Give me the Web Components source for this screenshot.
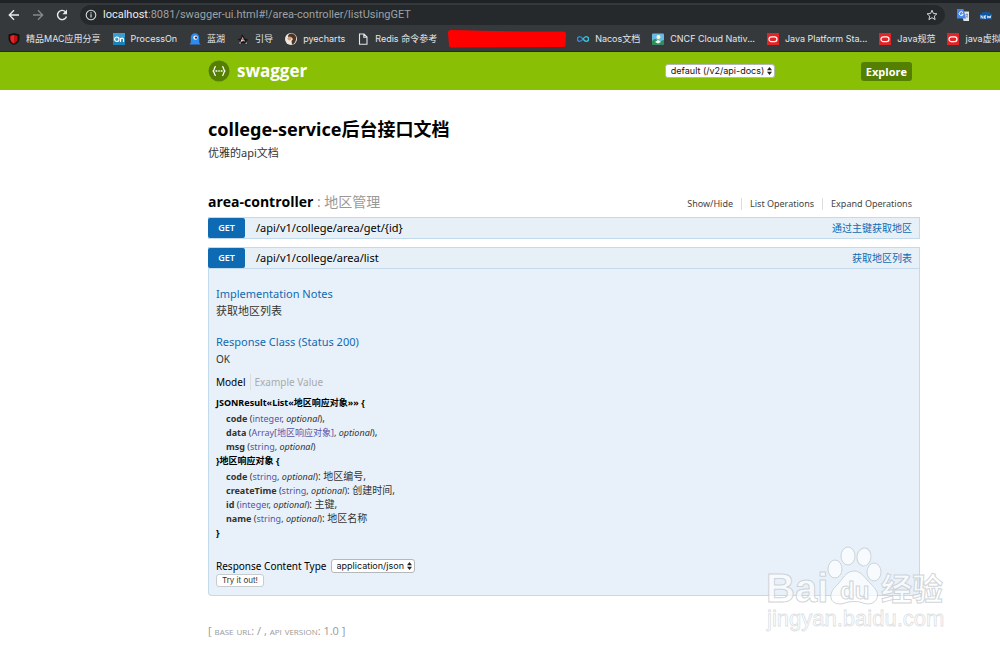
<!DOCTYPE html>
<html lang="zh-CN">
<head>
<meta charset="utf-8">
<title>Swagger UI</title>
<style>
  body {
    --body-font: "Noto Sans", "Noto Sans CJK SC", sans-serif;
    --display-font: "Open Sans", "Noto Sans CJK SC", sans-serif;
    margin: 0;
    overflow-x: hidden;
    background: #fff;
    color: #333;
    font-family: var(--body-font);
    font-size: 11px;
    line-height: 16px;
  }
</style>
</head>
<body>
<browser-chrome>
  <bookmark-item name="精品MAC应用分享">
    <svg viewBox="0 0 12 12"><path d="M6 0 11.500 1.500V6c0 3-2.500 5-5.500 6C3 11 .5 9 .5 6V1.500z" fill="#111"/><path d="M6 2 9.500 3v3c0 2-1.500 3.500-3.500 4.500C4 9.500 2.500 8 2.500 6V3z" fill="#b11"/><path d="M6 2v8.500C4 9.500 2.500 8 2.500 6V3z" fill="#e22"/></svg>
  </bookmark-item>
  <bookmark-item name="ProcessOn">
    <svg viewBox="0 0 12 12"><path d="M0 0h12v12H0z" fill="#1b83b8"/><path d="M0 0h12v4L0 8z" fill="#3b9fce"/><circle cx="3.800" cy="6.200" r="2.200" fill="none" stroke="#fff" stroke-width="1.200"/><path d="M7.500 9V5m0 1.500c.6-1.800 3-1.800 3 0V9" fill="none" stroke="#fff" stroke-width="1.200"/></svg>
  </bookmark-item>
  <bookmark-item name="蓝湖">
    <svg viewBox="0 0 12 12"><path d="M1.800 9.500V4.500a4.200 4.200 0 0 1 8.400 0v5l1.300 2H.5z" fill="#2d8cf0"/><circle cx="6.500" cy="4.600" r="2.200" fill="#fff"/><circle cx="7" cy="4.600" r="1.200" fill="#14396b"/></svg>
  </bookmark-item>
  <bookmark-item name="引导">
    <svg viewBox="0 0 12 12"><path d="M5 1 7.500 5 11.500 7 9 8l1.500 3.500L6 10l-4 1.500L3.500 8 .5 6.500 4 5z" fill="#15161a"/><path d="M5.500 4 8 8.500 6 8l-2.500 1z" fill="#eee"/><path d="m5 6 1-1 1 2-1 1z" fill="#d33"/><path d="m2 10 1.500-1v2zM9 9l1 1.500-1.500.5z" fill="#fff"/></svg>
  </bookmark-item>
  <bookmark-item name="pyecharts">
    <svg viewBox="0 0 12 12"><circle cx="6" cy="6" r="6" fill="#eee8df"/><path d="M3 4c0-5 7-4 8 0 .5 3-1 7-4 7.500L6.500 8 8 6 6 4z" fill="#4c3426"/><circle cx="4.500" cy="5.500" r="2" fill="#d9a27c"/></svg>
  </bookmark-item>
  <bookmark-item name="Redis 命令参考">
    <svg viewBox="0 0 12 12"><path d="M2.500 1h4.500l3 3v7.300H2.500zM6.800 1v3.200H10" fill="none" stroke="#e4e6e8" stroke-width="1.100"/></svg>
  </bookmark-item>
  <redacted-mark></redacted-mark>
  <bookmark-item name="Nacos文档">
    <svg viewBox="0 0 12 12"><path d="M6 6C4.500 4 3.800 3.600 2.800 3.600a2.400 2.400 0 0 0 0 4.800C4.200 8.400 5 7.500 6 6" fill="none" stroke="#2f8fe0" stroke-width="1.300"/><path d="M6 6c1-1.500 1.800-2.400 3.200-2.400a2.400 2.400 0 0 1 0 4.800C8 8.400 7.500 8 6 6" fill="none" stroke="#38c8de" stroke-width="1.300"/></svg>
  </bookmark-item>
  <bookmark-item name="CNCF Cloud Nativ...">
    <svg viewBox="0 0 12 12"><rect y=".5" width="12" height="11" rx="1" fill="#69b9e6"/><circle cx="6.500" cy="4" r="2" fill="#fff6c8"/><path d="M0 8c3-3 4-2 6 0s4-1 6-1v4.500H0z" fill="#2c9150"/><path d="m3 9 3-2 3 2-3 1.500z" fill="#f3fff5"/></svg>
  </bookmark-item>
  <bookmark-item name="Java Platform Sta...">
    <svg viewBox="0 0 12 12"><path d="M0 0h12v12H0z" fill="#e02428"/><rect x="2" y="3.800" width="8" height="4.800" rx="2.400" fill="none" stroke="#fff" stroke-width="1.200"/></svg>
  </bookmark-item>
  <bookmark-item name="Java规范">
    <svg viewBox="0 0 12 12"><path d="M0 0h12v12H0z" fill="#e02428"/><rect x="2" y="3.800" width="8" height="4.800" rx="2.400" fill="none" stroke="#fff" stroke-width="1.200"/></svg>
  </bookmark-item>
  <bookmark-item name="java虚拟">
    <svg viewBox="0 0 12 12"><path d="M0 0h12v12H0z" fill="#e02428"/><rect x="2" y="3.800" width="8" height="4.800" rx="2.400" fill="none" stroke="#fff" stroke-width="1.200"/></svg>
  </bookmark-item>
</browser-chrome>

<swagger-header></swagger-header>

<swagger-page>
  <api-info heading="college-service后台接口文档">优雅的api文档</api-info>
  <api-resource name="area-controller" description="地区管理">
    <api-operation method="GET" path="/api/v1/college/area/get/{id}" summary="通过主键获取地区"></api-operation>
    <api-operation method="GET" path="/api/v1/college/area/list" summary="获取地区列表" open>
      <operation-details>
        <span slot="notes">获取地区列表</span>
        <span slot="response">OK</span>
        <model-signature name="JSONResult«List«地区响应对象»»">
          <model-property name="code" type="integer" end=","></model-property>
          <model-property name="data" type="Array[地区响应对象]" end=","></model-property>
          <model-property name="msg" type="string"></model-property>
        </model-signature>
        <model-signature name="地区响应对象" follows>
          <model-property name="code" type="string" end=": 地区编号,"></model-property>
          <model-property name="createTime" type="string" end=": 创建时间,"></model-property>
          <model-property name="id" type="integer" end=": 主键,"></model-property>
          <model-property name="name" type="string" end=": 地区名称"></model-property>
        </model-signature>
      </operation-details>
    </api-operation>
  </api-resource>
  <api-footer></api-footer>
</swagger-page>

<site-watermark></site-watermark>

<script>
function render(element, html) {
  const template = document.createElement('template');
  template.innerHTML = html;
  element.attachShadow({ mode: 'open' }).appendChild(template.content.cloneNode(true));
}

class BrowserChrome extends HTMLElement {
  constructor() {
    super();
    render(this, `
      <style>
        :host {
          display: block;
          overflow: hidden;
          background: #35393c;
          border-top: 3px solid #202326;
          border-bottom: 1px solid #26282b;
        }
        .toolbar {
          display: flex;
          align-items: center;
          gap: 12px;
          height: 23px;
          padding-left: 8px;
        }
        button {
          display: flex;
          padding: 0;
          border: 0;
          background: none;
        }
        .address {
          display: flex;
          flex: 1;
          align-items: center;
          gap: 6px;
          height: 20px;
          padding: 0 7px 0 5px;
          border-radius: 10px;
          background: #25292c;
        }
        .url {
          flex: 1;
          color: #9da1a5;
          font: 11px/20px Roboto, sans-serif;
        }
        .url b {
          color: #eceef0;
          font-weight: 400;
        }
        .bookmarks {
          display: flex;
          align-items: center;
          gap: 12px;
          height: 25px;
          padding-left: 8px;
        }
        .extensions {
          display: flex;
          align-items: center;
          gap: 11px;
          padding-right: 8px;
        }
      </style>
      <div class="toolbar">
        <button aria-label="Back"><svg width="12" height="12" viewBox="0 0 12 12"><path d="M11 6H1.500M6 1.300 1.300 6 6 10.700" fill="none" stroke="#e8eaed" stroke-width="1.400"/></svg></button>
        <button aria-label="Forward"><svg width="12" height="12" viewBox="0 0 12 12"><path d="M1 6h9.500M6 1.300 10.700 6 6 10.700" fill="none" stroke="#86898c" stroke-width="1.300"/></svg></button>
        <button aria-label="Reload"><svg width="12" height="12" viewBox="0 0 12 12"><path d="M10.500 7.500A4.600 4.600 0 1 1 9.400 2.700" fill="none" stroke="#e8eaed" stroke-width="1.400"/><path d="M11 .6v4.600H6.400z" fill="#e8eaed"/></svg></button>
        <div class="address">
          <svg width="12" height="12" viewBox="0 0 12 12"><circle cx="6" cy="6" r="4.800" fill="none" stroke="#d5d8db" stroke-width="1.100"/><path d="M6 5.300v3.300M6 3.200v1.200" stroke="#d5d8db" stroke-width="1.200"/></svg>
          <div class="url" role="textbox" contenteditable="true" spellcheck="false" aria-label="Address"><b>localhost</b>:8081/swagger-ui.html#!/area-controller/listUsingGET</div>
          <button aria-label="Bookmark this page"><svg width="12" height="12" viewBox="0 0 12 12"><path d="m6 1.200 1.400 3.300 3.500.3-2.600 2.300.8 3.500L6 8.700l-3.100 1.900.8-3.500L1.100 4.800l3.500-.3z" fill="none" stroke="#d5d8db"/></svg></button>
        </div>
        <div class="extensions">
          <button aria-label="Translate"><svg width="12" height="12" viewBox="0 0 12 12"><path d="M4.500 2.500H12V12H6.500z" fill="#e2e5e9"/><path d="M0 0h6.500l2.500 9.500H0z" fill="#4687ec"/><path d="M6 3.600a2 2 0 1 0 .2 1.600H4.500" fill="none" stroke="#fff"/><path d="M8.500 5.500H11m-1.200-1v1m.7 0c0 1.500-1 2.500-1.700 3m.2-2c.4 1 1 1.500 2 2" fill="none" stroke="#68788c" stroke-width=".7"/></svg></button>
          <button aria-label="New extension"><svg width="12" height="12" viewBox="0 0 12 12"><path d="M2 3h3l1-1 1 1h3v3H2z" fill="#17558e"/><path d="M0 4.500h12v6H0z" fill="#0d56a1"/><path d="M1 9.500v-3l2 3v-3m3 .3H4.500v2.500H6M4.500 8H6m1.200-1.500.7 2.700L9 7l1 2.200.8-2.700" fill="none" stroke="#fff" stroke-width=".8"/></svg></button>
        </div>
      </div>
      <nav class="bookmarks"><slot></slot></nav>
    `);
  }
}

class BookmarkItem extends HTMLElement {
  constructor() {
    super();
    render(this, `
      <style>
        :host {
          display: block;
          flex: none;
        }
        a {
          display: flex;
          align-items: center;
          gap: 6px;
          color: #e4e6e8;
          font: 9px/14px Inter, "Noto Sans CJK SC", sans-serif;
          text-decoration: none;
          white-space: nowrap;
        }
        ::slotted(svg) {
          display: block;
          width: 12px;
          height: 12px;
        }
      </style>
      <a href="#"><slot></slot><span class="name"></span></a>
    `);
  }

  connectedCallback() {
    this.shadowRoot.querySelector('.name').textContent = this.getAttribute('name');
  }
}

class RedactedMark extends HTMLElement {
  constructor() {
    super();
    render(this, `
      <style>
        :host {
          display: block;
          flex: none;
          width: 118px;
          height: 18px;
          margin: 0 -1px;
        }
        svg {
          display: block;
        }
      </style>
      <svg width="118" height="18" viewBox="0 0 118 18"><path d="M3 0C40 1 80 1.500 115 1.500q3 0 3 3L117.500 15q0 2-3 2L3 17.500Q1 17.500 1 15L0 3q0-3 3-3z" fill="#fe0000"/></svg>
    `);
  }
}

class SwaggerHeader extends HTMLElement {
  constructor() {
    super();
    render(this, `
      <style>
        :host {
          display: flex;
          align-items: center;
          height: 38px;
          padding: 0 88px 0 208px;
          background: #89bf04;
          font-family: var(--display-font);
        }
        .logo {
          display: flex;
          flex: 1;
          align-items: center;
          gap: 7px;
          color: #fff;
          font-size: 17px;
          font-weight: 700;
          line-height: 24px;
          text-decoration: none;
        }
        form {
          display: flex;
          align-items: center;
          gap: 86px;
        }
        .explore {
          height: 19px;
          padding: 0 5px;
          border: 0;
          border-radius: 3px;
          background: #547f00;
          color: #fff;
          font: inherit;
          font-weight: 700;
          line-height: 19px;
        }
      </style>
      <a class="logo" href="#">
        <svg width="22" height="22" viewBox="0 0 22 22"><circle cx="11" cy="11" r="10.500" fill="#547f00"/><path d="M7.800 6.500C5.800 6.500 7 10.500 4.800 11 7 11.500 5.800 15.500 7.800 15.500M14.200 6.500c2 0 .8 4 3 4.500-2.200.5-1 4.500-3 4.500" fill="none" stroke="#fff" stroke-width="1.300"/><path d="M7.500 11h1.800m1 0h1.400m1 0h1.800" stroke="#fff" stroke-width="1.500"/></svg>
        <span>swagger</span>
      </a>
      <form>
        <mac-select label="API definition" value="default (/v2/api-docs)" style="--select-width: 110px"></mac-select>
        <button class="explore" type="button">Explore</button>
      </form>
    `);
  }
}

// Drop-down with the stacked up/down arrows of the native macOS control
class MacSelect extends HTMLElement {
  constructor() {
    super();
    render(this, `
      <style>
        :host {
          display: inline-grid;
          align-items: center;
          width: var(--select-width);
        }
        select, svg {
          grid-area: 1 / 1;
        }
        select {
          box-sizing: border-box;
          width: 100%;
          height: 14px;
          margin: 0;
          padding: 0 5px;
          appearance: none;
          border: 1px solid #b4b8ba;
          border-radius: 3px;
          background: #fff;
          color: #111;
          font: 9px/12px Inter, sans-serif;
        }
        svg {
          justify-self: end;
          margin-right: 3px;
          pointer-events: none;
        }
      </style>
      <select><option></option></select>
      <svg width="5" height="8" viewBox="0 0 5 8"><path d="M2.500 0 5 3.200H0zM2.500 8 0 4.800h5z" fill="#222"/></svg>
    `);
  }

  connectedCallback() {
    this.shadowRoot.querySelector('select').setAttribute('aria-label', this.getAttribute('label'));
    this.shadowRoot.querySelector('option').textContent = this.getAttribute('value');
  }
}

class SwaggerPage extends HTMLElement {
  constructor() {
    super();
    render(this, `
      <style>
        :host {
          display: block;
          padding: 27px 80px 0 208px;
        }
      </style>
      <slot></slot>
    `);
  }
}

class ApiInfo extends HTMLElement {
  constructor() {
    super();
    render(this, `
      <style>
        :host {
          display: block;
          margin-bottom: 31px;
        }
        h1 {
          margin: 0 0 4px;
          color: #000;
          font-family: var(--body-font);
          font-size: 18px;
          line-height: 24px;
        }
      </style>
      <h1></h1>
      <slot></slot>
    `);
  }

  connectedCallback() {
    this.shadowRoot.querySelector('h1').textContent = this.getAttribute('heading');
  }
}

class ApiResource extends HTMLElement {
  constructor() {
    super();
    render(this, `
      <style>
        :host {
          display: block;
        }
        .heading {
          display: flex;
          align-items: flex-start;
          justify-content: space-between;
          height: 25px;
        }
        h2 {
          margin: 0;
          color: #999;
          font-family: var(--display-font);
          font-size: 14px;
          font-weight: 400;
          line-height: 20px;
        }
        h2 a {
          color: #000;
          font-weight: 700;
          text-decoration: none;
        }
        ul {
          display: flex;
          margin: 6px 8px 0 0;
          padding: 0;
          list-style: none;
          font-size: 9px;
          line-height: 12px;
        }
        li + li {
          margin-left: 8px;
          padding-left: 8px;
          border-left: 1px solid #ddd;
        }
        li a {
          color: #444;
          text-decoration: none;
        }
        .operations {
          display: flex;
          flex-direction: column;
          gap: 8px;
        }
      </style>
      <div class="heading">
        <h2><a href="#"></a> : <span></span></h2>
        <ul>
          <li><a href="#">Show/Hide</a></li>
          <li><a href="#">List Operations</a></li>
          <li><a href="#">Expand Operations</a></li>
        </ul>
      </div>
      <div class="operations"><slot></slot></div>
    `);
  }

  connectedCallback() {
    this.shadowRoot.querySelector('h2 a').textContent = this.getAttribute('name');
    this.shadowRoot.querySelector('h2 span').textContent = this.getAttribute('description');
  }
}

class ApiOperation extends HTMLElement {
  constructor() {
    super();
    render(this, `
      <style>
        :host {
          display: block;
        }
        .heading {
          display: flex;
          align-items: center;
          height: 20px;
          border: 1px solid #c3d9ec;
          background: #e7f0f7;
        }
        a {
          text-decoration: none;
        }
        .method {
          width: 37px;
          margin-left: -1px;
          border-radius: 2px;
          background: #0f6ab4;
          color: #fff;
          font-family: var(--display-font);
          font-size: 9px;
          font-weight: 600;
          line-height: 20px;
          text-align: center;
        }
        .path {
          flex: 1;
          padding-left: 11px;
          color: #000;
          font-size: 11px;
        }
        .summary {
          padding-right: 7px;
          color: #0f6ab4;
          font-size: 10px;
        }
        .content {
          display: none;
          padding: 16px 7px 8px;
          border: 1px solid #c3d9ec;
          border-top: 0;
          border-radius: 0 0 4px 4px;
          background: #e8f1f9;
        }
        :host([open]) .content {
          display: block;
        }
      </style>
      <div class="heading">
        <a class="method" href="#"></a>
        <a class="path" href="#"></a>
        <a class="summary" href="#"></a>
      </div>
      <div class="content"><slot></slot></div>
    `);
  }

  connectedCallback() {
    this.shadowRoot.querySelector('.method').textContent = this.getAttribute('method');
    this.shadowRoot.querySelector('.path').textContent = this.getAttribute('path');
    this.shadowRoot.querySelector('.summary').textContent = this.getAttribute('summary');
  }
}

class OperationDetails extends HTMLElement {
  constructor() {
    super();
    render(this, `
      <style>
        :host {
          display: block;
        }
        h4 {
          margin: 0;
          color: #0f6ab4;
          font-size: 11px;
          font-weight: 400;
          line-height: 18px;
        }
        p {
          margin: 0 0 14px;
        }
        .response {
          margin-bottom: 7px;
          font-size: 10px;
        }
        .tabs {
          display: flex;
          margin-bottom: 5px;
        }
        .tabs button {
          height: 16px;
          padding: 0;
          border: 0;
          background: none;
          color: #aaa;
          font: inherit;
          font-size: 10px;
        }
        .tabs .active {
          margin-right: 4px;
          padding-right: 4px;
          border-right: 1px solid #ddd;
          color: #000;
        }
        .content-type {
          display: flex;
          align-items: center;
          gap: 4px;
          margin-top: 17px;
          color: #000;
          font-size: 10px;
        }
        .submit {
          display: block;
          height: 13px;
          padding: 0 5px;
          border: 1px solid #c8cccf;
          border-radius: 3px;
          background: #fff;
          color: #333;
          font: 8px/11px Inter, sans-serif;
        }
      </style>
      <h4>Implementation Notes</h4>
      <p><slot name="notes"></slot></p>
      <h4>Response Class (Status 200)</h4>
      <p class="response"><slot name="response"></slot></p>
      <div class="tabs">
        <button class="active" type="button">Model</button>
        <button type="button">Example Value</button>
      </div>
      <slot></slot>
      <div class="content-type">
        <span>Response Content Type</span>
        <mac-select label="Response Content Type" value="application/json" style="--select-width: 84px"></mac-select>
      </div>
      <button class="submit" type="button">Try it out!</button>
    `);
  }
}

class ModelSignature extends HTMLElement {
  constructor() {
    super();
    render(this, `
      <style>
        :host {
          display: block;
          color: #000;
          font-size: 9px;
        }
        b {
          display: block;
          line-height: 16px;
        }
        .properties {
          padding-left: 10px;
        }
      </style>
      <b class="start"></b>
      <div class="properties"><slot></slot></div>
      <b class="end">}</b>
    `);
  }

  connectedCallback() {
    // A signature that follows another one starts on its closing brace's line
    const start = this.hasAttribute('follows') ? '}' : '';
    this.shadowRoot.querySelector('.start').textContent = `${start}${this.getAttribute('name')} {`;
    const next = this.nextElementSibling;
    if (next && next.hasAttribute('follows')) {
      this.shadowRoot.querySelector('.end').remove();
    }
  }
}

class ModelProperty extends HTMLElement {
  constructor() {
    super();
    render(this, `
      <style>
        :host {
          display: block;
          height: 14px;
          color: #333;
          line-height: 14px;
        }
        .type {
          color: #55a;
        }
        .end {
          font-size: 10px;
        }
      </style>
      <b class="name"></b> (<span class="type"></span>, <i>optional</i>)<span class="end"></span>
    `);
  }

  connectedCallback() {
    this.shadowRoot.querySelector('.name').textContent = this.getAttribute('name');
    this.shadowRoot.querySelector('.type').textContent = this.getAttribute('type');
    this.shadowRoot.querySelector('.end').textContent = this.getAttribute('end');
  }
}

class ApiFooter extends HTMLElement {
  constructor() {
    super();
    render(this, `
      <style>
        :host {
          display: block;
          padding: 27px 0 15px;
          color: #999;
          font-family: var(--display-font);
        }
        span {
          font-variant: small-caps;
        }
      </style>
      [ <span>base url</span>: / , <span>api version</span>: 1.0 ]
    `);
  }
}

class SiteWatermark extends HTMLElement {
  constructor() {
    super();
    render(this, `
      <style>
        :host {
          position: absolute;
          top: 540px;
          right: 48px;
          pointer-events: none;
        }
        svg {
          display: block;
        }
        text {
          font-family: "Liberation Sans", "Noto Sans CJK SC", sans-serif;
        }
      </style>
      <svg width="186" height="96" viewBox="0 0 186 96" fill="#fff" fill-opacity=".7" stroke="#c4cacf" stroke-opacity=".8">
        <text x="0" y="62" font-size="40" font-weight="700">Bai</text>
        <ellipse cx="69" cy="29" rx="7" ry="9"/>
        <ellipse cx="82" cy="16" rx="7" ry="9"/>
        <ellipse cx="98" cy="17" rx="7" ry="9" transform="rotate(8 98 17)"/>
        <ellipse cx="108" cy="32" rx="7" ry="9"/>
        <path d="M88 31c7 0 11 7 16 12s9 9 7 15-9 7-14 5-13-2-18 0-13 1-14-5 3-10 7-14 8-13 16-13z"/>
        <text x="74" y="59" font-size="24" font-weight="700">du</text>
        <text x="115" y="60" font-size="31" font-weight="700">经验</text>
        <text x="1" y="86" font-size="22" stroke-width=".8" stroke-opacity=".6">jingyan.baidu.com</text>
      </svg>
    `);
  }
}

customElements.define('browser-chrome', BrowserChrome);
customElements.define('bookmark-item', BookmarkItem);
customElements.define('redacted-mark', RedactedMark);
customElements.define('mac-select', MacSelect);
customElements.define('swagger-header', SwaggerHeader);
customElements.define('swagger-page', SwaggerPage);
customElements.define('api-info', ApiInfo);
customElements.define('api-resource', ApiResource);
customElements.define('api-operation', ApiOperation);
customElements.define('operation-details', OperationDetails);
customElements.define('model-signature', ModelSignature);
customElements.define('model-property', ModelProperty);
customElements.define('api-footer', ApiFooter);
customElements.define('site-watermark', SiteWatermark);
</script>
</body>
</html>
